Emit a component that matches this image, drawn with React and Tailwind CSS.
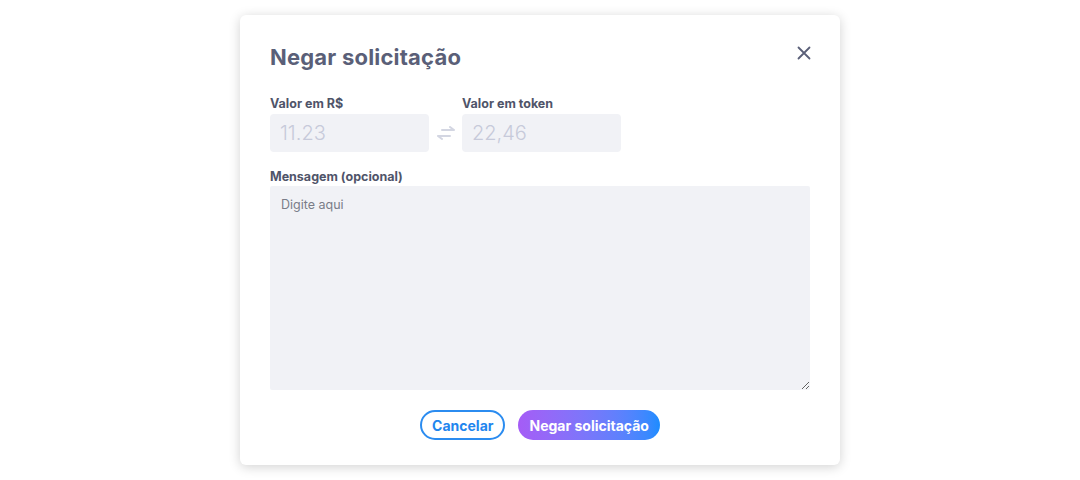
import React from "react";

const font = { fontFamily: "Inter, 'Noto Sans', sans-serif" };

const SwapIcon = () => (
  <svg width="20" height="14" viewBox="0 0 20 14" fill="none" stroke="#d3d6e2" strokeWidth="2" strokeLinecap="round" strokeLinejoin="round">
    <path d="M6 4h12M14 1l4 3" />
    <path d="M14 10H2M6 13l-4-3" />
  </svg>
);

export default function App() {
  return (
    <div className="w-full h-[480px] bg-white flex justify-center pt-[15px]" style={font}>
      <div className="w-[600px] h-[450px] bg-white rounded-md shadow-[0_2px_12px_rgba(0,0,0,0.18)] px-[30px] pt-[29px] flex flex-col">
        {/* Header */}
        <div className="flex items-center justify-between h-[26px]">
          <h1 className="text-[22px] font-bold text-[#5a5f78] tracking-[0.2px]">Negar solicitação</h1>
          <svg width="14" height="14" viewBox="0 0 14 14" stroke="#5a5f78" strokeWidth="1.8" strokeLinecap="round" className="-mr-[1px] -mt-[8px]">
            <path d="M1.5 1.5l11 11M12.5 1.5l-11 11" />
          </svg>
        </div>

        {/* Values */}
        <div className="flex items-end mt-[26px]">
          <div className="flex flex-col">
            <label className="text-[12.5px] font-bold text-[#4f5469] leading-[16px] mb-[2px]">Valor em R$</label>
            <div className="w-[159px] h-[38px] bg-[#f1f2f6] rounded-[4px] flex items-center px-[10px] text-[20px] font-light text-[#c7cada]">
              11.23
            </div>
          </div>
          <div className="w-[33px] h-[38px] flex items-center justify-center">
            <SwapIcon />
          </div>
          <div className="flex flex-col">
            <label className="text-[12.5px] font-bold text-[#4f5469] leading-[16px] mb-[2px]">Valor em token</label>
            <div className="w-[159px] h-[38px] bg-[#f1f2f6] rounded-[4px] flex items-center px-[10px] text-[20px] font-light text-[#c7cada]">
              22,46
            </div>
          </div>
        </div>

        {/* Message */}
        <label className="text-[12.5px] font-bold text-[#4f5469] leading-[16px] mt-[17px] mb-[1px]">Mensagem (opcional)</label>
        <textarea
          placeholder="Digite aqui"
          className="w-[540px] h-[204px] bg-[#f1f2f6] rounded-[2px] px-[11px] py-[10px] text-[12.5px] text-[#555] placeholder:text-[#7a7d88] outline-none"
          style={font}
        />

        {/* Actions */}
        <div className="flex justify-center gap-[13px] mt-[20px]">
          <button className="h-[30px] px-[10px] rounded-full border-2 border-[#2b8cf0] text-[#1f86ee] text-[14px] font-bold">
            Cancelar
          </button>
          <button className="h-[30px] px-[11px] rounded-full bg-gradient-to-r from-[#a55cf6] to-[#1a8cff] text-white text-[14px] font-bold">
            Negar solicitação
          </button>
        </div>
      </div>
    </div>
  );
}
